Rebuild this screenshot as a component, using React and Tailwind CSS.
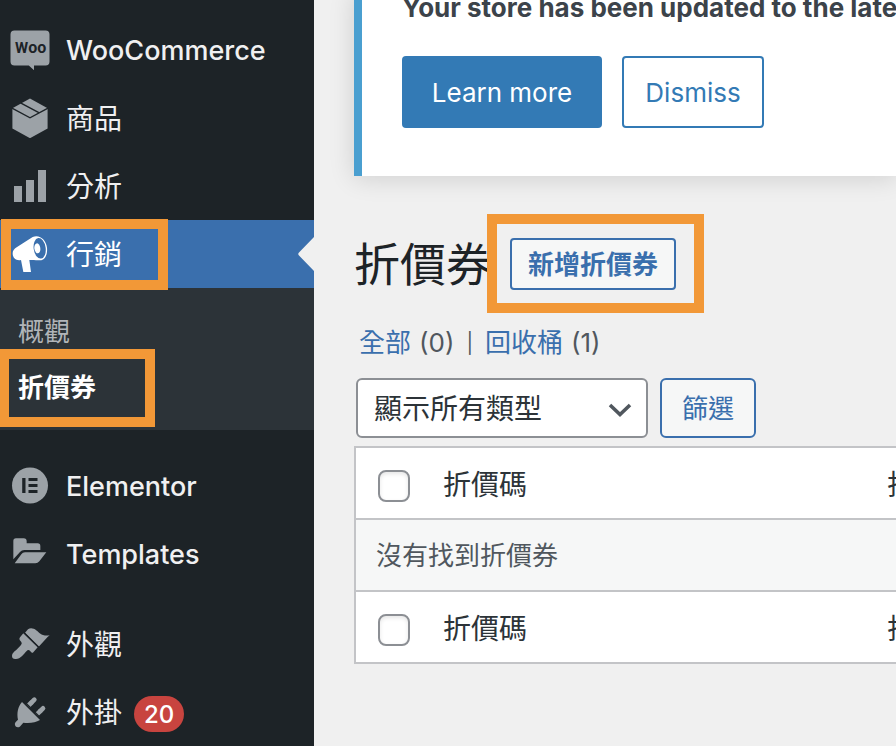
import React, { useState } from 'react';

const WooIcon = () => (
  <svg viewBox="0 0 40 40" className="size-10 shrink-0" aria-hidden="true">
    <path
      fill="#9ca2a7"
      d="M4.5 0.5h31a4 4 0 0 1 4 4v27a4 4 0 0 1-4 4H24v4.700l-5.200-4.700H4.500a4 4 0 0 1-4-4v-27a4 4 0 0 1 4-4z"
    />
    <text x="5" y="23" fill="#1d2327" fontFamily="Roboto, sans-serif" fontWeight="700" fontSize="15">
      W<tspan fontSize="16">oo</tspan>
    </text>
  </svg>
);

const ProductsIcon = () => (
  <svg viewBox="0 0 40 40" className="size-10 shrink-0" aria-hidden="true">
    <path fill="#9ca2a7" d="M20 0.5 37.6 10.2v20.2L20 40.2 2.4 30.4V10.2z" />
    <path fill="none" stroke="#1d2327" strokeWidth="1.4" d="M2 10.2 20 19.8l18-9.6M10.5 4.8l18.8 10" />
  </svg>
);

const AnalyticsIcon = () => (
  <svg viewBox="0 0 40 40" className="size-10 shrink-0" fill="#9ca2a7" aria-hidden="true">
    <rect x="4" y="20" width="8" height="16" />
    <rect x="16" y="14" width="8" height="22" />
    <rect x="28" y="4" width="8" height="32" />
  </svg>
);

const MarketingIcon = () => (
  <svg viewBox="30 72 120 120" className="size-10 shrink-0" aria-hidden="true">
    <path
      fill="#fff"
      d="M98 81c22-8 40 9 43 32 2 20-6 38-20 38-12 0-20-2-33-1l5 36H70l-7-36c-14 3-25-5-25-20 0-8 4-13 12-18z"
    />
    <ellipse cx="119" cy="115" rx="18" ry="31" fill="#3a6fad" transform="rotate(-8 119 115)" />
    <ellipse cx="112" cy="115" rx="9" ry="15" fill="#fff" transform="rotate(-8 112 115)" />
  </svg>
);

const ElementorIcon = () => (
  <svg viewBox="0 0 40 40" className="size-10 shrink-0" aria-hidden="true">
    <circle cx="20" cy="19.5" r="18" fill="#9ca2a7" />
    <path fill="#1d2327" d="M12.2 12h3.3v15h-3.3zM18.5 12h9v3h-9zM18.5 18h9v3h-9zM18.5 24h9v3h-9z" />
  </svg>
);

const TemplatesIcon = () => (
  <svg viewBox="30 282 120 120" className="size-10 shrink-0" fill="#9ca2a7" aria-hidden="true">
    <path d="M40 303q0-8 8-8h23q9 0 9 9v6h33q8 0 8 8v12H73q-8 0-13 6l-20 22z" />
    <path d="M64 343q4-6 11-6h64l-21 27q-5 6-12 6H44z" />
  </svg>
);

const AppearanceIcon = () => (
  <svg viewBox="30 12 120 120" className="size-10 shrink-0" fill="#9ca2a7" aria-hidden="true">
    <path d="M75 38 84 28q7-6 17-2c11 4 17 16 28 19q9 3 20 1-7 5-11 10L116 80z" />
    <path d="M70 40l43 42-13 15q-3 3-6 0l-6-6q-4-3-8 2C70 103 62 117 48 117c-8 1-12-3-12-9 0-11 12-15 27-33q4-5 1-9l-5-6q-2-4 1-8z" />
    <path stroke="#1d2327" strokeWidth="4" d="M70 36l48 47" />
  </svg>
);

const PluginsIcon = () => (
  <svg viewBox="30 216 120 120" className="size-10 shrink-0" fill="#9ca2a7" aria-hidden="true">
    <path d="M66 246l54 54c-13 8-31 10-50 8l-8 9c-5 7-15 6-17-2-2-6 2-9 9-16-4-20 0-40 12-53z" />
    <path stroke="#9ca2a7" strokeWidth="14" d="M84 258l12-12M110 284l12-12" />
    <path stroke="#9ca2a7" strokeWidth="14" strokeLinecap="round" d="M95 247l8-8M121 273l8-8" />
    <path stroke="#1d2327" strokeWidth="4" d="M72 244l50 50" />
  </svg>
);

const menuTop = [
  { label: 'WooCommerce', Icon: WooIcon, latin: true },
  { label: '商品', Icon: ProductsIcon },
  { label: '分析', Icon: AnalyticsIcon },
];

const menuMiddle = [
  { label: 'Elementor', Icon: ElementorIcon, latin: true },
  { label: 'Templates', Icon: TemplatesIcon, latin: true },
];

const menuBottom = [
  { label: '外觀', Icon: AppearanceIcon },
  { label: '外掛', Icon: PluginsIcon, count: 20 },
];

const MenuItem = ({ label, Icon, latin, count }) => (
  <li>
    <a href="#" className="flex h-[68px] items-center gap-4 pl-[10px] text-[#f0f0f1]">
      <Icon />
      <span className={latin ? 'pt-0.5 text-[27px] font-medium' : 'pt-0.5'}>{label}</span>
      {count && (
        <span className="-ml-1 mt-1 flex h-9 w-[50px] items-center justify-center rounded-full bg-[#c8443f] pt-0.5 text-2xl font-medium text-white">
          {count}
        </span>
      )}
    </a>
  </li>
);

const Sidebar = () => (
  <nav className="w-[314px] shrink-0 bg-[#1d2327] pt-4 text-[28px] leading-9">
    <ul>
      {menuTop.map(item => <MenuItem key={item.label} {...item} />)}
      <li>
        <a href="#" className="relative flex h-[68px] items-center gap-4 bg-[#3a6fad] pl-[10px] text-white">
          <MarketingIcon />
          <span className="pt-0.5">行銷</span>
          <svg viewBox="0 0 16 34" className="ml-auto h-[34px] w-4" fill="#f0f0f0" aria-hidden="true">
            <path d="M16 0v34L1 18.5q-1.500-1.500 0-3z" />
          </svg>
          <span className="pointer-events-none absolute -top-px left-px h-[71px] w-[167px] border-10 border-[#f29837]" />
        </a>
        <ul className="bg-[#2c3338] pt-4 pb-[14px] text-[26px]">
          <li>
            <a href="#" className="flex h-14 items-center pl-[18px] text-[#b1b5b9]">概觀</a>
          </li>
          <li>
            <a href="#" className="relative flex h-14 items-center pl-[18px] font-bold text-white">
              折價券
              <span className="pointer-events-none absolute -top-[11px] -left-px h-[78px] w-[156px] border-10 border-[#f29837]" />
            </a>
          </li>
        </ul>
      </li>
    </ul>
    <ul className="mt-[22px]">
      {menuMiddle.map(item => <MenuItem key={item.label} {...item} />)}
    </ul>
    <ul className="mt-[22px]">
      {menuBottom.map(item => <MenuItem key={item.label} {...item} />)}
    </ul>
  </nav>
);

const Notice = () => (
  <section className="-mt-[10px] border-l-8 border-[#4a9fd0] bg-white pb-12 pl-10 shadow-[0_2px_24px_rgba(0,0,0,0.14)]">
    <p className="text-[26px] leading-9 font-bold whitespace-nowrap text-[#3c434a]">
      Your store has been updated to the latest version
    </p>
    <div className="mt-[30px] flex gap-5 text-[26px] leading-9">
      <button className="h-[72px] w-[200px] rounded-sm bg-[#337ab5] pt-0.5 text-white">Learn more</button>
      <button className="h-[72px] w-[142px] rounded-sm border-2 border-[#337ab5] bg-white pt-0.5 text-[#337ab5]">
        Dismiss
      </button>
    </div>
  </section>
);

const HeaderRow = ({ id, checked, onChange }) => (
  <tr className="h-[72px] border-y-2 border-[#c3c4c7] bg-white text-left text-[28px] text-[#2c3338]">
    <th className="w-[88px] pl-[22px] font-normal">
      <input
        id={id}
        type="checkbox"
        aria-label="全選"
        checked={checked}
        onChange={onChange}
        className="mt-[6px] block size-8 appearance-none rounded-lg border-2 border-[#8c8f94] bg-white shadow-[inset_0_2px_4px_rgba(0,0,0,0.1)] checked:bg-[#3a6fad]"
      />
    </th>
    <th className="w-[444px] pt-1 font-normal">
      <label htmlFor={id}>折價碼</label>
    </th>
    <th className="pt-1 font-normal whitespace-nowrap">折價券類型</th>
  </tr>
);

const CouponTable = () => {
  const [allSelected, setAllSelected] = useState(false);
  const toggleAll = () => setAllSelected(prev => !prev);

  return (
    <table className="mt-2 w-[1000px] table-fixed border-collapse border-2 border-[#c3c4c7] leading-9">
      <thead>
        <HeaderRow id="select-top" checked={allSelected} onChange={toggleAll} />
      </thead>
      <tbody>
        <tr className="h-[72px] bg-[#f6f7f7] text-[26px] text-[#50575e]">
          <td colSpan={3} className="pt-0.5 pl-5">沒有找到折價券</td>
        </tr>
      </tbody>
      <tfoot>
        <HeaderRow id="select-bottom" checked={allSelected} onChange={toggleAll} />
      </tfoot>
    </table>
  );
};

export default function App() {
  const [type, setType] = useState('all');

  return (
    <div
      lang="zh-Hant"
      className="flex min-h-screen overflow-hidden bg-[#f0f0f0] font-['Inter','Noto_Sans_CJK_TC',sans-serif]"
    >
      <Sidebar />
      <main className="min-w-0 flex-1 overflow-hidden pl-10">
        <Notice />

        <div className="mt-[62px] flex h-[52px] items-center">
          <h1 className="text-[46px] leading-[52px] text-[#1d2327]">折價券</h1>
          <div className="relative ml-[18px]">
            <button className="block h-[52px] w-[166px] rounded-sm border-2 border-[#3a6fad] bg-[#f6f7f7] pt-0.5 text-[26px] leading-9 font-bold text-[#3a6fad]">
              新增折價券
            </button>
            <span className="pointer-events-none absolute -top-6 -left-[23px] h-[99px] w-[217px] border-10 border-[#f29837]" />
          </div>
        </div>

        <div className="mt-[34px] flex h-9 items-center gap-2 pl-[5px] text-[26px] text-[#50575e]">
          <a href="#" className="text-[#3a6fad]">全部</a>
          <span>(0)</span>
          <span className="mx-1 pt-0.5 text-xl">|</span>
          <a href="#" className="text-[#3a6fad]">回收桶</a>
          <span>(1)</span>
        </div>

        <div className="mt-[18px] flex gap-3 pl-[2px]">
          <div className="relative">
            <select
              aria-label="折價券類型"
              value={type}
              onChange={(e) => setType(e.target.value)}
              className="block h-[60px] w-[292px] appearance-none rounded-md border-2 border-[#8c8f94] bg-white pt-0.5 pl-4 text-[28px] leading-9 text-[#2c3338]"
            >
              <option value="all">顯示所有類型</option>
            </select>
            <svg
              viewBox="0 0 24 16"
              className="pointer-events-none absolute top-6 right-4 h-4 w-6"
              fill="none"
              stroke="#50575e"
              strokeWidth="3.6"
              aria-hidden="true"
            >
              <path d="M2 3l10 9.500L22 3" />
            </svg>
          </div>
          <button className="h-[60px] w-24 rounded-md border-2 border-[#3a6fad] bg-[#f6f7f7] pt-0.5 text-[26px] leading-9 text-[#3a6fad]">
            篩選
          </button>
        </div>

        <CouponTable />
      </main>
    </div>
  );
}
